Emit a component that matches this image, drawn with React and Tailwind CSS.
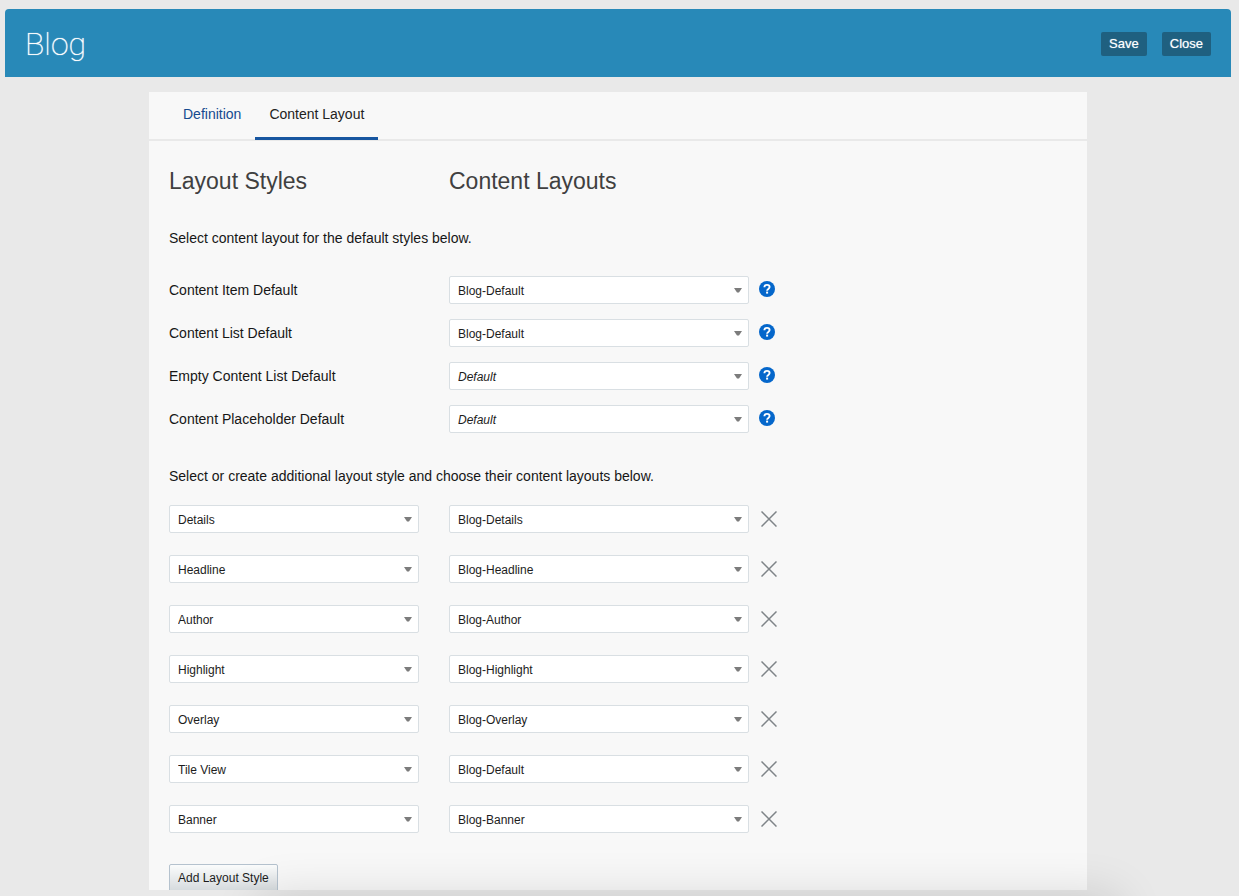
import React from 'react';

const defaultStyles = [
  { id: 'item', label: 'Content Item Default', value: 'Blog-Default' },
  { id: 'list', label: 'Content List Default', value: 'Blog-Default' },
  { id: 'empty', label: 'Empty Content List Default', value: 'Default', italic: true },
  { id: 'placeholder', label: 'Content Placeholder Default', value: 'Default', italic: true },
];

const additionalStyles = [
  { style: 'Details', layout: 'Blog-Details' },
  { style: 'Headline', layout: 'Blog-Headline' },
  { style: 'Author', layout: 'Blog-Author' },
  { style: 'Highlight', layout: 'Blog-Highlight' },
  { style: 'Overlay', layout: 'Blog-Overlay' },
  { style: 'Tile View', layout: 'Blog-Default' },
  { style: 'Banner', layout: 'Blog-Banner' },
];

function Select({ id, label, value, italic }) {
  return (
    <div className="relative w-full">
      <select
        id={id}
        aria-label={label}
        defaultValue={value}
        className={`block h-7 w-full appearance-none rounded-xs border border-[#d9dfe3] bg-white pt-0.5 pr-6 pl-2 text-[12px] text-[#1c1c1c] ${italic ? 'italic' : ''}`}
      >
        <option>{value}</option>
      </select>
      <svg
        viewBox="0 0 8 5"
        className="pointer-events-none absolute top-3 right-[7px] h-[5px] w-2"
        fill="#7c7c7c"
        aria-hidden="true"
      >
        <path d="M0 0h8L5 4.5H3z" />
      </svg>
    </div>
  );
}

function HelpIcon() {
  return (
    <svg viewBox="0 0 16 16" className="size-4" aria-hidden="true">
      <circle cx="8" cy="8" r="8" fill="#0567cb" />
      <path
        d="M5.4 6.3C5.4 4.7 6.5 3.9 8 3.9s2.6.9 2.6 2.2c0 1.8-2.5 1.8-2.5 3.6"
        fill="none"
        stroke="#fff"
        strokeWidth="1.9"
      />
      <rect x="7.1" y="10.6" width="2" height="2" fill="#fff" />
    </svg>
  );
}

function RemoveIcon() {
  return (
    <svg viewBox="0 0 16 16" className="size-4" aria-hidden="true">
      <path d="M.5.5l15 15M15.5.5l-15 15" stroke="#7f8488" strokeWidth="1.5" fill="none" />
    </svg>
  );
}

const headerButton = 'h-6 rounded-xs bg-[#1f6080] px-2 text-[13px] text-white [text-shadow:0_0_1px_rgba(255,255,255,0.6)]';

export default function App() {
  return (
    <div className="relative flex h-screen flex-col overflow-hidden bg-[#e9e9e9] pt-[9px] pr-2 pb-1.5 pl-[5px] font-['Liberation_Sans',Arial,sans-serif] text-[14px] leading-5 text-[#161616]">
      <header className="flex h-[68px] shrink-0 items-center justify-between rounded-t bg-[#2889b8] px-5 pt-0.5">
        <h1 className="font-['Roboto',sans-serif] text-[32px] leading-10 font-thin text-white [text-shadow:0_0_1px_#fff]">Blog</h1>
        <div className="flex gap-[15px]">
          <button type="button" className={headerButton}>Save</button>
          <button type="button" className={headerButton}>Close</button>
        </div>
      </header>

      <main className="mx-auto mt-[15px] min-h-0 w-full max-w-[938px] flex-1 overflow-y-auto bg-[#f8f8f8] [scrollbar-width:none]">
        <nav className="flex h-[49px] border-b-2 border-[#e9e9e9] pl-5">
          <a href="#definition" className="px-3.5 pt-3 text-[#154a8f]">Definition</a>
          <a
            href="#content-layout"
            aria-current="page"
            className="h-12 border-b-3 border-[#1756a0] px-3.5 pt-3 text-[#222]"
          >
            Content Layout
          </a>
        </nav>

        <div className="px-5 pt-6">
          <div className="flex gap-[30px] text-[23px] leading-8 text-[#404040]">
            <h2 className="w-[250px]">Layout Styles</h2>
            <h2>Content Layouts</h2>
          </div>

          <p className="mt-[31px]">Select content layout for the default styles below.</p>

          <div className="mt-7 flex flex-col gap-[15px]">
            {defaultStyles.map((row) => (
              <div key={row.id} className="flex items-center">
                <label htmlFor={row.id} className="w-[280px]">{row.label}</label>
                <div className="w-[300px]">
                  <Select id={row.id} value={row.value} italic={row.italic} />
                </div>
                <button type="button" aria-label={`Help for ${row.label}`} className="ml-2.5 pb-0.5">
                  <HelpIcon />
                </button>
              </div>
            ))}
          </div>

          <p className="mt-[33px]">
            Select or create additional layout style and choose their content layouts below.
          </p>

          <div className="mt-[19px] flex flex-col gap-[22px]">
            {additionalStyles.map((row) => (
              <div key={row.style} className="flex items-center">
                <div className="w-[250px]">
                  <Select label="Layout style" value={row.style} />
                </div>
                <div className="ml-[30px] w-[300px]">
                  <Select label={`Content layout for ${row.style}`} value={row.layout} />
                </div>
                <button type="button" aria-label={`Remove ${row.style}`} className="ml-3">
                  <RemoveIcon />
                </button>
              </div>
            ))}
          </div>

          <button
            type="button"
            className="mt-[31px] h-7 rounded-xs border border-[#b5c2ce] bg-linear-to-b from-[#fbfcfc] to-[#d5dadd] px-2 text-[12px] text-[#1c1c1c]"
          >
            Add Layout Style
          </button>
        </div>
      </main>

      <div
        className="pointer-events-none absolute top-full right-[120px] left-[260px] h-20 rounded-lg shadow-[0_0_48px_rgba(0,0,0,0.14)]"
        aria-hidden="true"
      />
    </div>
  );
}
